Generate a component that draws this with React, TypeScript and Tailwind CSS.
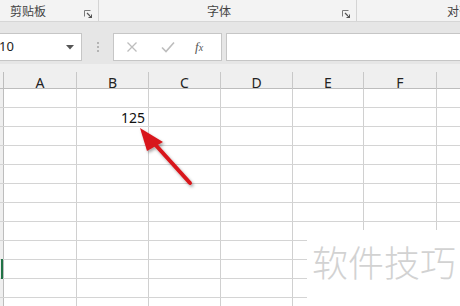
import React from "react";

const cols = [
  { label: "A", w: 73 },
  { label: "B", w: 72 },
  { label: "C", w: 72 },
  { label: "D", w: 72 },
  { label: "E", w: 71 },
  { label: "F", w: 73 },
  { label: "", w: 60 },
];

const rows = Array.from({ length: 12 }, (_, i) => i);

const Launcher = () => (
  <svg width="8" height="8" viewBox="0 0 8 8" className="shrink-0">
    <path d="M0.5 6.5V0.5H6.5" stroke="#7a7a7a" strokeWidth="1" fill="none" />
    <path d="M3 3L7.5 7.5M7.5 4.5V7.5H4.5" stroke="#555" strokeWidth="1.2" fill="none" />
  </svg>
);

export default function App() {
  return (
    <div
      className="relative w-[460px] h-[306px] overflow-hidden bg-white"
      style={{ fontFamily: '"Noto Sans", "Noto Sans CJK SC", sans-serif' }}
    >
      {/* ribbon group labels */}
      <div className="flex h-[22px] bg-[#f3f3f3] border-b border-[#d6d6d6] text-[12px] text-[#444]">
        <div className="flex items-center shrink-0 w-[99px] border-r border-[#d4d4d4] pl-[10px] pr-[6px]">
          <span className="flex-1" style={{ fontFamily: '"Noto Sans CJK SC", sans-serif' }}>剪贴板</span>
          <div className="mt-[6px]"><Launcher /></div>
        </div>
        <div className="flex items-center shrink-0 w-[258px] border-r border-[#d4d4d4] pl-[108px] pr-[6px]">
          <span className="flex-1" style={{ fontFamily: '"Noto Sans CJK SC", sans-serif' }}>字体</span>
          <div className="mt-[6px]"><Launcher /></div>
        </div>
        <div className="flex items-center shrink-0 pl-[90px]">
          <span className="whitespace-nowrap" style={{ fontFamily: '"Noto Sans CJK SC", sans-serif' }}>对齐方式</span>
        </div>
      </div>

      {/* formula bar */}
      <div className="flex items-start h-[42px] bg-[#e6e6e6] pt-[11px]">
        <div className="flex items-center shrink-0 w-[82px] h-[28px] bg-white border border-l-0 border-[#c6c6c6] text-[13px] text-[#222]">
          <span className="flex-1 ml-[-1px]">10</span>
          <svg width="8" height="5" viewBox="0 0 8 5" className="mr-[7px]">
            <path d="M0 0H8L4 4.5Z" fill="#555" />
          </svg>
        </div>
        <div className="flex flex-col shrink-0 gap-[2px] w-[31px] items-center mt-[9px]">
          <div className="w-[2px] h-[2px] bg-[#b4b4b4]" />
          <div className="w-[2px] h-[2px] bg-[#b4b4b4]" />
          <div className="w-[2px] h-[2px] bg-[#b4b4b4]" />
        </div>
        <div className="flex items-center shrink-0 w-[109px] h-[28px] bg-white border border-[#c6c6c6]">
          <svg width="12" height="12" viewBox="0 0 12 12" className="ml-[12px]">
            <path d="M1.5 1.5L10.5 10.5M10.5 1.5L1.5 10.5" stroke="#bdbdbd" strokeWidth="1.3" />
          </svg>
          <svg width="14" height="12" viewBox="0 0 14 12" className="ml-[23px]">
            <path d="M1 6.5L5 10.5L13 1.5" stroke="#bdbdbd" strokeWidth="1.6" fill="none" />
          </svg>
          <span
            className="ml-[20px] text-[13px] italic text-[#555]"
            style={{ fontFamily: '"Liberation Serif", serif' }}
          >
            f<span className="text-[10px]">x</span>
          </span>
        </div>
        <div className="flex-1 h-[28px] ml-[4px] bg-white border border-r-0 border-[#c6c6c6]" />
      </div>

      {/* column header */}
      <div className="flex h-[25px] bg-[#efefef] border-b border-[#bdbdbd] text-[14px] text-[#222]">
        <div className="w-[4px] shrink-0 border-r border-[#bdbdbd] mt-[8px]" />
        {cols.map((c, i) => (
          <div key={i} className="flex flex-col shrink-0" style={{ width: c.w }}>
            <div className="flex-1 flex items-end justify-center pb-[1px] border-r border-[#c8c8c8] mt-[8px]">
              {c.label}
            </div>
          </div>
        ))}
      </div>

      {/* grid rows */}
      {rows.map((r) => (
        <div key={r} className="flex h-[19px] border-b border-[#d4d4d4]">
          <div className="relative w-[4px] shrink-0 bg-[#efefef] border-r border-[#bdbdbd]">
            {r === 9 && <div className="absolute left-[1px] top-[-1px] w-[2px] h-[20px] bg-[#217346]" />}
          </div>
          {cols.map((c, i) => (
            <div
              key={i}
              className="flex items-center justify-end pr-[3px] shrink-0 border-r border-[#d0d0d0] text-[14px] text-[#111]"
              style={{ width: c.w }}
            >
              {r === 1 && i === 1 ? "125" : ""}
            </div>
          ))}
        </div>
      ))}

      {/* watermark */}
      <div className="absolute left-[307px] top-[230px] w-[153px] h-[76px] bg-white flex items-start pt-[13px] pl-[5px]">
        <span
          className="text-[36px] leading-none font-light text-[#d2d2d2]"
          style={{ fontFamily: '"Noto Sans CJK SC", sans-serif' }}
        >
          软件技巧
        </span>
      </div>

      {/* red arrow */}
      <svg className="absolute left-0 top-0" width="460" height="306" viewBox="0 0 460 306">
        <defs>
          <filter id="sh" x="-20%" y="-20%" width="140%" height="140%">
            <feDropShadow dx="1.5" dy="2" stdDeviation="1.5" floodColor="#000" floodOpacity="0.35" />
          </filter>
        </defs>
        <g filter="url(#sh)">
          <path d="M190 183L152 141" stroke="#d8161b" strokeWidth="4" strokeLinecap="round" />
          <path d="M140 128L163 142L147 151Z" fill="#d8161b" />
        </g>
      </svg>
    </div>
  );
}
